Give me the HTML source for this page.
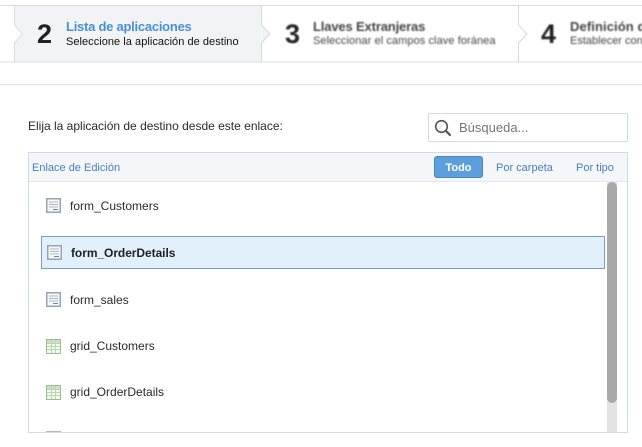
<!DOCTYPE html>
<html lang="es"><head><meta charset="utf-8"><title>Lista de aplicaciones</title>
<style>
html,body{margin:0;padding:0;background:#fff}
body{width:642px;height:447px;position:relative;overflow:hidden;font-family:"Liberation Sans",Arial,sans-serif;color:#222}
.a{position:absolute;white-space:nowrap}
.t{font-size:12px;line-height:14px;color:#2a2a2a}
svg{position:absolute;display:block}
</style></head><body>
<svg style="left:0;top:0" width="642" height="90">
<rect x="14" y="6" width="247" height="56" fill="#f2f3f5"/>
<path d="M0 5.500H642M0 62H642" stroke="#dcdcdc" stroke-width="1" fill="none"/>
<path d="M0 84.500H642" stroke="#e2e2e2" stroke-width="1"/>
<path d="M14.500 6V25L22 34L14.500 43V62" fill="#fff" stroke="#dcdcdc"/>
<path d="M14 25.500L21.500 34L14 42.500Z" fill="#fff"/>
<path d="M261.500 6V25L270 34L261.500 43V62" fill="#f2f3f5" stroke="#d8d8d8"/>
<path d="M518.500 6V25L527 34L518.500 43V62" fill="#fff" stroke="#d8d8d8"/>
</svg>
<div class="a" style="left:37px;top:19px;font-size:27px;line-height:30px;font-weight:bold;color:#222">2</div>
<div class="a" style="left:66px;top:19px;font-size:13px;line-height:16px;font-weight:bold;color:#4a8fd6;letter-spacing:-.25px">Lista de aplicaciones</div>
<div class="a" style="left:66px;top:35px;font-size:11px;line-height:14px;color:#111;letter-spacing:.04px">Seleccione la aplicación de destino</div>
<div class="a" style="left:285px;top:19px;font-size:27px;line-height:30px;font-weight:bold;color:#222;filter:blur(.7px)">3</div>
<div class="a" style="left:313px;top:19px;font-size:13px;line-height:16px;font-weight:bold;color:#444;letter-spacing:-.15px;filter:blur(.7px)">Llaves Extranjeras</div>
<div class="a" style="left:313px;top:34px;font-size:11px;line-height:14px;color:#444;letter-spacing:.08px;filter:blur(.7px)">Seleccionar el campos clave foránea</div>
<div class="a" style="left:541px;top:19px;font-size:27px;line-height:30px;font-weight:bold;color:#222;filter:blur(.7px)">4</div>
<div class="a" style="left:570px;top:19px;font-size:13px;line-height:16px;font-weight:bold;color:#444;letter-spacing:.1px;filter:blur(.7px)">Definición d</div>
<div class="a" style="left:570px;top:34px;font-size:11px;line-height:14px;color:#444;filter:blur(.7px)">Establecer con</div>

<div class="a t" style="left:28px;top:119px">Elija la aplicación de destino desde este enlace:</div>

<div class="a" style="left:428px;top:113px;width:198px;height:27px;border:1px solid #d0dbe3;border-radius:2px;background:#fff"></div>
<svg style="left:434px;top:119px" width="18" height="18" viewBox="0 0 18 18"><circle cx="7.500" cy="7.500" r="5.800" fill="none" stroke="#555" stroke-width="1.600"/><path d="M11.800 11.800L16 16" stroke="#555" stroke-width="2.200" stroke-linecap="round"/></svg>
<div class="a" style="left:459px;top:120px;font-size:13px;line-height:16px;color:#757575">Búsqueda...</div>

<div class="a" style="left:28px;top:152px;width:598px;height:279px;border:1px solid #d0dbe3;background:#fff"></div>
<div class="a" style="left:29px;top:153px;width:598px;height:28px;background:#f4f6fa;border-bottom:1px solid #e2e8ee"></div>
<div class="a" style="left:32px;top:161px;font-size:11px;line-height:14px;color:#4a80b8">Enlace de Edición</div>
<div class="a" style="left:434px;top:156px;width:47px;height:20px;background:#5b9fdc;border:1px solid #4a86b8;border-radius:3px;color:#fff;font-size:11px;font-weight:bold;line-height:22px;text-align:center">Todo</div>
<div class="a" style="left:496px;top:161px;font-size:11px;line-height:14px;color:#4a80b8">Por carpeta</div>
<div class="a" style="left:576px;top:161px;font-size:11px;line-height:14px;color:#4a80b8">Por tipo</div>

<div class="a" style="left:607px;top:182px;width:10px;height:250px;background:#e3e3e3"></div>
<div class="a" style="left:607px;top:182px;width:10px;height:221px;background:#a9a9a9;border-radius:5px"></div>

<div class="a" style="left:41px;top:236px;width:562px;height:31px;background:#e2f0fc;border:1px solid #7f9db5"></div>

<svg style="left:46px;top:198px" width="15" height="15" viewBox="0 0 15 15"><rect x=".75" y=".75" width="13.500" height="13.500" fill="#f7f8f9" stroke="#98a4ae" stroke-width="1.500"/><path d="M3 4H12M3 6.500H12M3 9H12" stroke="#b0b8be"/><path d="M7 11.500H12" stroke="#4a93b8"/></svg>
<div class="a t" style="left:70px;top:199px">form_Customers</div>

<svg style="left:47px;top:245px" width="15" height="15" viewBox="0 0 15 15"><rect x=".75" y=".75" width="13.500" height="13.500" fill="#f7f8f9" stroke="#98a4ae" stroke-width="1.500"/><path d="M3 4H12M3 6.500H12M3 9H12" stroke="#b0b8be"/><path d="M7 11.500H12" stroke="#4a93b8"/></svg>
<div class="a t" style="left:71px;top:246px;font-weight:bold;color:#222;letter-spacing:-.06px">form_OrderDetails</div>

<svg style="left:46px;top:292px" width="15" height="15" viewBox="0 0 15 15"><rect x=".75" y=".75" width="13.500" height="13.500" fill="#f7f8f9" stroke="#98a4ae" stroke-width="1.500"/><path d="M3 4H12M3 6.500H12M3 9H12" stroke="#b0b8be"/><path d="M7 11.500H12" stroke="#4a93b8"/></svg>
<div class="a t" style="left:70px;top:293px">form_sales</div>

<svg style="left:46px;top:339px" width="15" height="15" viewBox="0 0 15 15"><rect x=".5" y=".5" width="14" height="14" fill="#f3f8ee" stroke="#9dbb96"/><rect x="1" y="1" width="13" height="3" fill="#cfe0c2"/><path d="M1 4.500H14M1 7.500H14M1 10.500H14M5.500 1V14M9.500 1V14" stroke="#bdd4b2"/></svg>
<div class="a t" style="left:70px;top:339px">grid_Customers</div>

<svg style="left:46px;top:385px" width="15" height="15" viewBox="0 0 15 15"><rect x=".5" y=".5" width="14" height="14" fill="#f3f8ee" stroke="#9dbb96"/><rect x="1" y="1" width="13" height="3" fill="#cfe0c2"/><path d="M1 4.500H14M1 7.500H14M1 10.500H14M5.500 1V14M9.500 1V14" stroke="#bdd4b2"/></svg>
<div class="a t" style="left:70px;top:385px">grid_OrderDetails</div>

<div class="a" style="left:46px;top:431px;width:15px;height:1px;background:#a8c69c"></div>
</body></html>
